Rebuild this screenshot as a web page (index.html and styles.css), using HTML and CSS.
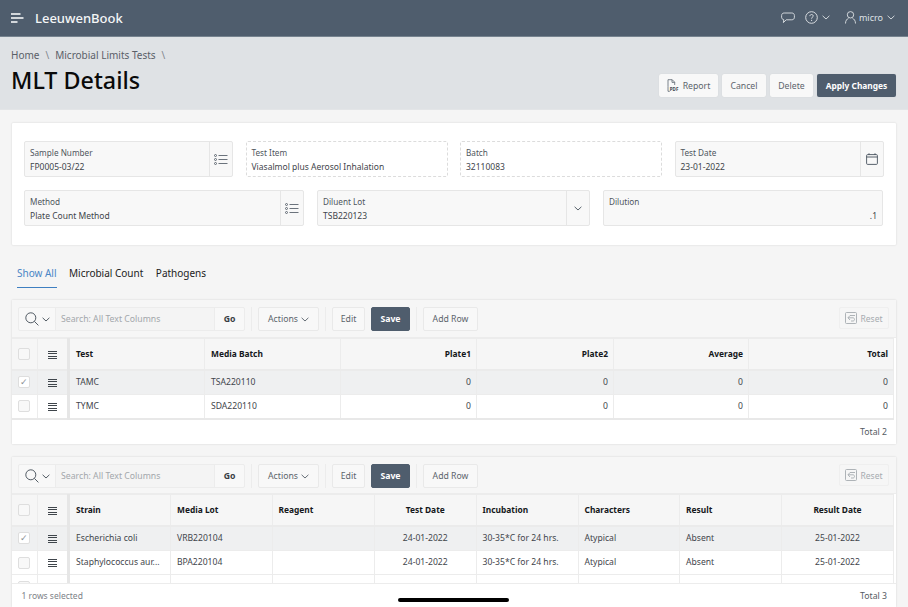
FILE: index.html
```html
<!DOCTYPE html>
<html lang="en">
<head>
<meta charset="utf-8">
<title>MLT Details</title>
<link rel="stylesheet" href="styles.css">
</head>
<body>
<header class="topbar">
  <svg class="burger" width="13" height="10" viewBox="0 0 13 10"><path d="M0 1h9.500M0 5h12.500M0 9h6.500" stroke="#fff" stroke-width="1.400" fill="none"/></svg>
  <span class="brand">LeeuwenBook</span>
  <span class="spacer"></span>
  <svg class="ico-chat" width="14" height="12" viewBox="0 0 14 12"><path d="M3.200 1h7.600C12.400 1 13.400 2 13.400 3.600v1.600c0 1.600-1 2.600-2.600 2.600H5.200L2.400 10.600l.4-2.900C1.400 7.400.6 6.500.6 5.200V3.600C.6 2 1.600 1 3.200 1z" fill="none" stroke="#dfe3e7" stroke-width=".9"/></svg>
  <svg class="ico-help" width="13" height="13" viewBox="0 0 13 13"><circle cx="6.500" cy="6.500" r="5.800" fill="none" stroke="#e6e9ec" stroke-width=".9"/><path d="M4.900 5.100c0-2.100 3.300-2.100 3.300-.1 0 1.200-1.600 1.200-1.600 2.700" fill="none" stroke="#e6e9ec" stroke-width=".9"/><circle cx="6.600" cy="9.300" r=".6" fill="#e6e9ec"/></svg>
  <svg class="chev-w" width="8" height="5" viewBox="0 0 8 5"><path d="M.6.800 4 4 7.400.800" fill="none" stroke="#dfe3e7" stroke-width=".9"/></svg>
  <svg class="ico-user" width="11" height="13" viewBox="0 0 11 13"><circle cx="5.500" cy="3.800" r="3.200" fill="none" stroke="#dfe3e7" stroke-width=".9"/><path d="M.5 12.500c0-3 1.500-4.500 3-5.200M10.500 12.500c0-3-1.500-4.500-3-5.200" fill="none" stroke="#dfe3e7" stroke-width=".9"/></svg>
  <span class="user">micro</span>
  <svg class="chev-w last" width="8" height="5" viewBox="0 0 8 5"><path d="M.6.800 4 4 7.400.800" fill="none" stroke="#dfe3e7" stroke-width=".9"/></svg>
</header>

<section class="pagehead">
  <div class="titles">
    <nav class="crumbs"><span>Home</span><i>\</i><span>Microbial Limits Tests</span><i>\</i></nav>
    <h1>MLT Details</h1>
  </div>
  <div class="actions">
    <button class="btn btn-report">
      <svg width="13" height="13" viewBox="0 0 13 13"><path d="M1 7.500V.7h4.200L7.700 3.200V6M5 .8v2.600h2.700M1 7.500v4.800h1.800" fill="none" stroke="#5c6670" stroke-width=".8"/><text x="2.800" y="11.500" class="pdf">PDF</text></svg>
      Report</button>
    <button class="btn btn-cancel">Cancel</button>
    <button class="btn btn-delete">Delete</button>
    <button class="btn btn-apply">Apply Changes</button>
  </div>
</section>

<main class="content">
  <section class="card">
    <div class="row row-a">
      <div class="field">
        <div class="fbody"><label>Sample Number</label><span>FP0005-03/22</span></div>
        <div class="fbtn"><svg width="14" height="11" viewBox="0 0 14 11"><g fill="none" stroke="#46515c" stroke-width=".8"><circle cx="1.500" cy="1.500" r="1"/><circle cx="1.500" cy="5.500" r="1"/><circle cx="1.500" cy="9.500" r="1"/><path d="M4.500 1.500H13.500M4.500 5.500H13.500M4.500 9.500H13.500"/></g></svg></div>
      </div>
      <div class="field ro">
        <div class="fbody"><label>Test Item</label><span>Viasalmol plus Aerosol Inhalation</span></div>
      </div>
      <div class="field ro">
        <div class="fbody"><label>Batch</label><span>32110083</span></div>
      </div>
      <div class="field">
        <div class="fbody"><label>Test Date</label><span>23-01-2022</span></div>
        <div class="fbtn"><svg width="12" height="12" viewBox="0 0 12 12"><g fill="none" stroke="#46515c" stroke-width=".9"><rect x=".6" y="1.600" width="10.800" height="9.800" rx="1"/><path d="M.6 4H11.400M3 .3V2M9 .3V2"/></g></svg></div>
      </div>
    </div>
    <div class="row row-b">
      <div class="field">
        <div class="fbody"><label>Method</label><span>Plate Count Method</span></div>
        <div class="fbtn"><svg width="14" height="11" viewBox="0 0 14 11"><g fill="none" stroke="#46515c" stroke-width=".8"><circle cx="1.500" cy="1.500" r="1"/><circle cx="1.500" cy="5.500" r="1"/><circle cx="1.500" cy="9.500" r="1"/><path d="M4.500 1.500H13.500M4.500 5.500H13.500M4.500 9.500H13.500"/></g></svg></div>
      </div>
      <div class="field">
        <div class="fbody"><label>Diluent Lot</label><span>TSB220123</span></div>
        <div class="fbtn"><svg width="8" height="5" viewBox="0 0 8 5"><path d="M.6.800 4 4 7.400.800" fill="none" stroke="#46515c" stroke-width=".9"/></svg></div>
      </div>
      <div class="field">
        <div class="fbody"><label>Dilution</label><span class="num">.1</span></div>
      </div>
    </div>
  </section>

  <nav class="tabs">
    <a class="tab active">Show All</a>
    <a class="tab">Microbial Count</a>
    <a class="tab">Pathogens</a>
  </nav>

  <section class="grid-region">
    <div class="toolbar">
      <div class="search">
        <div class="s-icon">
          <svg width="14" height="14" viewBox="0 0 14 14"><circle cx="5.800" cy="5.800" r="5" fill="none" stroke="#3f4953" stroke-width=".9"/><path d="M9.400 9.400 13.400 13.400" stroke="#3f4953" stroke-width=".9"/></svg>
          <svg width="8" height="5" viewBox="0 0 8 5"><path d="M.6.800 4 4 7.400.800" fill="none" stroke="#3f4953" stroke-width=".9"/></svg>
        </div>
        <div class="s-input">Search: All Text Columns</div>
        <div class="s-go">Go</div>
      </div>
      <span class="sep"></span>
      <div class="tb actions-btn">Actions <svg width="8" height="5" viewBox="0 0 8 5"><path d="M.6.800 4 4 7.400.800" fill="none" stroke="#565f68" stroke-width=".9"/></svg></div>
      <span class="sep"></span>
      <div class="tb edit-btn">Edit</div>
      <div class="tb save-btn">Save</div>
      <span class="sep"></span>
      <div class="tb add-btn">Add Row</div>
      <span class="spacer"></span>
      <div class="tb reset-btn"><svg width="12" height="12" viewBox="0 0 12 12"><g fill="none" stroke="#a6abb0" stroke-width=".9"><rect x=".5" y=".5" width="11" height="11" rx="1"/><path d="M10 3.500H5L3 5.800 5 8M3 5.800h5c2 0 2 3.200 0 3.200H6"/></g></svg> Reset</div>
    </div>
    <div class="tablewrap">
      <table class="t t1">
        <colgroup><col class="c-sel"><col class="c-menu"><col class="c136"><col class="c136"><col class="c136"><col class="c137"><col class="c135"><col></colgroup>
        <thead><tr><th class="sel"><b class="cb"></b></th><th class="menu"><b class="bars"></b></th><th class="l">Test</th><th class="l">Media Batch</th><th class="r">Plate1</th><th class="r">Plate2</th><th class="r">Average</th><th class="r">Total</th></tr></thead>
        <tbody>
          <tr class="on"><td class="sel"><b class="cb checked">✓</b></td><td class="menu"><b class="bars"></b></td><td>TAMC</td><td>TSA220110</td><td class="r">0</td><td class="r">0</td><td class="r">0</td><td class="r">0</td></tr>
          <tr><td class="sel"><b class="cb"></b></td><td class="menu"><b class="bars"></b></td><td>TYMC</td><td>SDA220110</td><td class="r">0</td><td class="r">0</td><td class="r">0</td><td class="r">0</td></tr>
        </tbody>
      </table>
    </div>
    <div class="foot foot1"><span>Total 2</span></div>
  </section>

  <section class="grid-region second">
    <div class="toolbar">
      <div class="search">
        <div class="s-icon">
          <svg width="14" height="14" viewBox="0 0 14 14"><circle cx="5.800" cy="5.800" r="5" fill="none" stroke="#3f4953" stroke-width=".9"/><path d="M9.400 9.400 13.400 13.400" stroke="#3f4953" stroke-width=".9"/></svg>
          <svg width="8" height="5" viewBox="0 0 8 5"><path d="M.6.800 4 4 7.400.800" fill="none" stroke="#3f4953" stroke-width=".9"/></svg>
        </div>
        <div class="s-input">Search: All Text Columns</div>
        <div class="s-go">Go</div>
      </div>
      <span class="sep"></span>
      <div class="tb actions-btn">Actions <svg width="8" height="5" viewBox="0 0 8 5"><path d="M.6.800 4 4 7.400.800" fill="none" stroke="#565f68" stroke-width=".9"/></svg></div>
      <span class="sep"></span>
      <div class="tb edit-btn">Edit</div>
      <div class="tb save-btn">Save</div>
      <span class="sep"></span>
      <div class="tb add-btn">Add Row</div>
      <span class="spacer"></span>
      <div class="tb reset-btn"><svg width="12" height="12" viewBox="0 0 12 12"><g fill="none" stroke="#a6abb0" stroke-width=".9"><rect x=".5" y=".5" width="11" height="11" rx="1"/><path d="M10 3.500H5L3 5.800 5 8M3 5.800h5c2 0 2 3.200 0 3.200H6"/></g></svg> Reset</div>
    </div>
    <div class="tablewrap clip">
      <table class="t t2">
        <colgroup><col class="c-sel"><col class="c-menu"><col class="c102"><col class="c101"><col class="c103"><col class="c101"><col class="c102"><col class="c101"><col class="c102"><col></colgroup>
        <thead><tr><th class="sel"><b class="cb"></b></th><th class="menu"><b class="bars"></b></th><th class="l">Strain</th><th class="l">Media Lot</th><th class="l">Reagent</th><th class="c">Test Date</th><th class="l">Incubation</th><th class="l">Characters</th><th class="l">Result</th><th class="c">Result Date</th></tr></thead>
        <tbody>
          <tr class="on"><td class="sel"><b class="cb checked">✓</b></td><td class="menu"><b class="bars"></b></td><td>Escherichia coli</td><td>VRB220104</td><td></td><td class="c">24-01-2022</td><td>30-35*C for 24 hrs.</td><td>Atypical</td><td>Absent</td><td class="c">25-01-2022</td></tr>
          <tr><td class="sel"><b class="cb"></b></td><td class="menu"><b class="bars"></b></td><td>Staphylococcus aur...</td><td>BPA220104</td><td></td><td class="c">24-01-2022</td><td>30-35*C for 24 hrs.</td><td>Atypical</td><td>Absent</td><td class="c">25-01-2022</td></tr>
          <tr><td class="sel"><b class="cb"></b></td><td class="menu"><b class="bars"></b></td><td></td><td></td><td></td><td></td><td></td><td></td><td></td><td></td></tr>
        </tbody>
      </table>
    </div>
    <div class="foot foot2"><span class="muted">1 rows selected</span><span>Total 3</span></div>
  </section>
</main>
<div class="home-indicator"></div>
</body>
</html>
```

FILE: styles.css
```css
* { box-sizing: border-box; }
html, body { margin: 0; height: 607px; overflow: hidden; }
body { background: #f5f5f5; font-family: "Noto Sans", "Open Sans", sans-serif; color: #3a3f45; font-size: 8.700px; position: relative; }
.spacer { flex: 1; }

.topbar { height: 37px; background: #4f5d6d; border-bottom: 1px solid #76838f; display: flex; align-items: center; color: #fff; padding: 0 13px 1px 11px; }
.burger { margin-right: 11px; }
.brand { font-size: 13px; font-weight: 500; color: #f4f6f7; }
.ico-chat { margin-right: 10px; }
.ico-help { margin-right: 4px; }
.chev-w { margin-right: 15px; }
.chev-w.last { margin: 0 0 0 4px; }
.ico-user { margin-right: 3px; }
.user { font-size: 9px; color: #dfe3e7; }

.pagehead { height: 73px; background: #dfe2e5; border-bottom: 1px solid #e3e5e7; display: flex; justify-content: space-between; padding: 0 12px 0 11px; }
.crumbs { display: flex; gap: 6px; font-size: 10px; color: #5a6068; padding-top: 11px; line-height: 14px; }
.crumbs i { font-style: normal; color: #81878d; }
h1 { margin: 3px 0 0; font-size: 23.300px; line-height: 30px; font-weight: 500; color: #0a0a0a; }
.actions { display: flex; gap: 4px; align-items: flex-start; padding-top: 37px; }
.btn { height: 23px; border: 0; border-radius: 2px; background: #f8f8f8; color: #5c646c; font: inherit; font-size: 8.700px; padding: 0; display: flex; align-items: center; justify-content: center; box-shadow: 0 0 1px rgba(0,0,0,.12); }
.btn-report { width: 59px; gap: 3px; }
.pdf { font-size: 4.500px; font-weight: 700; fill: #3f474f; }
.btn-cancel { width: 44px; }
.btn-delete { width: 43px; }
.btn-apply { width: 79px; background: #4f5d6d; color: #fff; font-weight: 700; font-size: 8.400px; }

.content { padding: 13px 12px 0 11.500px; }
.card { background: #fff; height: 122px; box-shadow: 0 0 2px rgba(0,0,0,.16); padding: 18px 13px 0 12.500px; border-radius: 1px; }
.row { display: grid; height: 36px; }
.row-a { grid-template-columns: 209px 202px 202px 209px; column-gap: 12.500px; }
.row-b { grid-template-columns: 280px 273px 280px; column-gap: 13px; margin-top: 13px; }
.field { display: flex; background: #f8f8f8; border: 1px solid #e6e6e6; border-radius: 2px; min-width: 0; }
.field.ro { background: #fff; border: 1px dashed #dcdcdc; }
.fbody { flex: 1; padding: 5px 5px 0; display: flex; flex-direction: column; min-width: 0; }
.fbody label { font-size: 8.200px; line-height: 12px; color: #4f565d; }
.fbody span { font-size: 8.500px; line-height: 13px; margin-top: 1px; color: #3f454b; }
.fbody .num { text-align: right; }
.fbtn { width: 23px; border-left: 1px solid #e6e6e6; display: flex; align-items: center; justify-content: center; }

.tabs { display: flex; gap: 12.500px; height: 43px; padding: 21px 0 0 5.500px; margin-bottom: 12px; }
.tab { height: 22px; font-size: 10px; line-height: 14px; color: #222; }
.tab.active { color: #4a86c5; border-bottom: 1px solid #3e7fc1; }

.grid-region { background: #fff; box-shadow: 0 0 2px rgba(0,0,0,.14); height: 144px; display: flex; flex-direction: column; margin-bottom: 13px; }
.grid-region.second { height: 150px; margin-bottom: 0; }
.toolbar { height: 38px; background: #f6f6f6; display: flex; align-items: flex-start; padding: 7px 6.500px 0; border-bottom: 1px solid #ececec; flex: none; }
.second .toolbar { height: 37px; }
.search { display: flex; height: 24px; width: 227px; border: 1px solid #ececec; border-radius: 2px; background: #f8f8f8; }
.s-icon { width: 37px; display: flex; gap: 3px; align-items: center; padding-left: 6px; border-right: 1px solid #ececec; }
.s-input { flex: 1; padding-left: 5px; line-height: 22px; font-size: 8.700px; color: #a3a7ab; background: #f4f4f4; }
.s-go { width: 30px; text-align: center; line-height: 22px; font-weight: 700; border-left: 1px solid #ececec; color: #3a3f45; }
.sep { width: 1px; height: 24px; background: #ececec; margin: 0 6px; }
.tb { height: 24px; border: 1px solid #e9e9e9; border-radius: 2px; background: #f8f8f8; display: flex; align-items: center; justify-content: center; color: #5c646c; }
.actions-btn { width: 61px; gap: 3px; }
.edit-btn { width: 33px; margin-right: 6px; }
.save-btn { width: 39px; background: #4f5d6d; border-color: #4f5d6d; color: #fff; font-weight: 700; }
.add-btn { width: 55px; }
.reset-btn { width: 50px; gap: 3px; border-color: #efefef; background: #f6f6f6; color: #a6abb0; font-size: 8.500px; height: 22px; margin-right: .5px; }

.tablewrap { flex: none; }
.tablewrap.clip { height: 90px; overflow: hidden; border-bottom: 1px solid #ececec; }
.t { border-collapse: collapse; table-layout: fixed; width: 882.500px; }
.c-sel { width: 26px; }
.c-menu { width: 31px; }
.c136 { width: 136px; } .c137 { width: 137px; } .c135 { width: 135px; }
.c101 { width: 101.500px; } .c102 { width: 102px; } .c103 { width: 102.500px; }
th, td { padding: 0 6px; border: 1px solid #ececec; border-width: 0 1px 1px 0; overflow: hidden; white-space: nowrap; font-size: 8.600px; text-align: left; }
th { height: 31px; background: #f6f6f6; color: #15181b; font-weight: 700; font-size: 8.400px; border-bottom: 2px solid #ebebeb; border-top: 1px solid #ececec; }
td { height: 24.500px; color: #3f454b; }
tbody tr:last-child td { border-bottom: 2px solid #e8e8e8; }
.t2 tbody tr:last-child td { border-bottom: 0; }
.on td { background: #eff0f1; }
.r, th.r { text-align: right; padding-right: 5px; }
.c, th.c { text-align: center; }
.sel, th.sel { padding: 0; text-align: center; }
.menu, th.menu { padding: 0; text-align: center; border-right: 3px solid #e6e6e6; }
.cb { display: inline-block; width: 12px; height: 12px; border: 1px solid #dedede; border-radius: 2px; background: #f8f8f8; vertical-align: middle; font-weight: 400; font-size: 9px; line-height: 10px; color: #8b9095; }
.cb.checked { background: #fff; }
.bars { display: inline-block; width: 9px; height: 8px; vertical-align: middle; background: repeating-linear-gradient(#3f454b 0 1px, transparent 1px 2.330px); }
.foot { flex: 1; display: flex; justify-content: space-between; align-items: center; padding: 0 9px 0 10px; color: #555b62; }
.foot1 { justify-content: flex-end; }
.muted { color: #7d8288; font-size: 8.500px; }
.home-indicator { position: absolute; left: 398px; top: 598px; width: 111px; height: 3.500px; border-radius: 2px; background: #000; }
```
